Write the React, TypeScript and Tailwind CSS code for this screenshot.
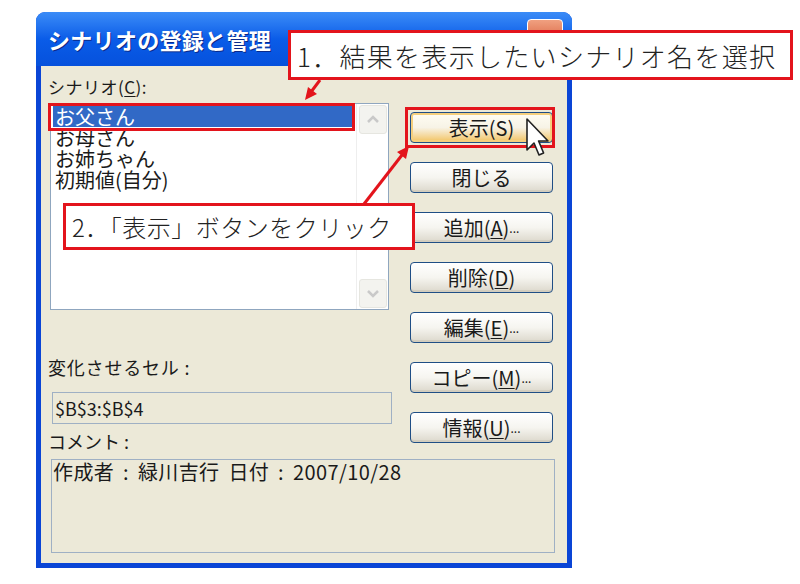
import React from 'react';

const jp = "font-['Noto_Sans_CJK_JP','Noto_Sans_CJK_SC',sans-serif]";

function Mn({ children }: { children: React.ReactNode }) {
  return <span className="underline underline-offset-2 decoration-1">{children}</span>;
}

function XpButton({ children, hot }: { children: React.ReactNode; hot?: boolean }) {
  return (
    <div
      className={
        'h-[31px] w-[143px] rounded-[4px] border border-[#1f4e85] flex items-center justify-center text-[20px] text-[#1a1a1a] ' +
        (hot
          ? 'bg-linear-to-b from-[#fffdf4] via-[#f7f3e6] to-[#f2c25a] shadow-[inset_0_0_0_2px_#f5cf7d]'
          : 'bg-linear-to-b from-white via-[#f6f5f0] to-[#dcd8cc] shadow-[inset_0_-2px_0_#d2cdbf]')
      }
    >
      {children}
    </div>
  );
}

function Chevron({ up }: { up?: boolean }) {
  return (
    <svg width="14" height="9" viewBox="0 0 14 9">
      <path
        d={up ? 'M2 7 L7 2 L12 7' : 'M2 2 L7 7 L12 2'}
        fill="none"
        stroke="#c9c9c9"
        strokeWidth="2.5"
      />
    </svg>
  );
}

export default function App() {
  const scenarios = ['お父さん', 'お母さん', 'お姉ちゃん', '初期値(自分)'];

  return (
    <div className={'relative w-[800px] h-[584px] bg-white overflow-hidden pt-[12px] pl-[36px] ' + jp}>
      {/* Dialog window */}
      <div className="w-[536px] h-[556px] flex flex-col rounded-t-[9px] bg-[#0a45d6]">
        {/* Title bar */}
        <div className="h-[54px] rounded-t-[9px] bg-linear-to-b from-[#3b8cf7] via-[#0a5ce8] to-[#0651dc] flex items-start justify-between pl-[12px] pr-[9px]">
          <span className="mt-[13px] text-[22px] font-bold text-white leading-[28px] tracking-[0.3px] [text-shadow:1px_1px_0_#0a2a8a]">
            シナリオの登録と管理
          </span>
          <div className="mt-[7px] w-[36px] h-[30px] rounded-[4px] border border-white bg-linear-to-b from-[#f0a080] to-[#d2532e]" />
        </div>

        {/* Client area */}
        <div className="flex-1 mx-[5px] mb-[5px] bg-[#ece9d8] pt-[9px] pl-[7px] pr-[14px] text-[#1a1a1a]">
          <div className="flex gap-[18px]">
            {/* Left column */}
            <div className="w-[344px] flex flex-col">
              <div className="h-[24px] leading-[24px] text-[17px] tracking-[0.5px]">
                シナリオ(<Mn>C</Mn>):
              </div>
              <div className="mt-[4px] ml-[2px] w-[339px] h-[207px] border border-[#8fa6bf] bg-white flex">
                <div className="flex-1 p-[2px]">
                  {scenarios.map((s, i) => (
                    <div
                      key={s}
                      className={
                        'h-[21px] leading-[21px] text-[20px] px-[2px] ' +
                        (i === 0 ? 'bg-[#3169c6] text-white' : 'text-[#1a1a1a]')
                      }
                    >
                      {s}
                    </div>
                  ))}
                </div>
                <div className="w-[32px] border-l border-[#eeeeee] flex flex-col justify-between py-[1px] pr-[1px] pl-[2px]">
                  <div className="h-[29px] rounded-[3px] bg-[#f3f3ef] border border-[#e6e6e0] flex items-center justify-center">
                    <Chevron up />
                  </div>
                  <div className="h-[29px] rounded-[3px] bg-[#f3f3ef] border border-[#e6e6e0] flex items-center justify-center">
                    <Chevron />
                  </div>
                </div>
              </div>
              <div className="mt-[45px] h-[24px] leading-[24px] text-[18px] tracking-[0.8px]">変化させるセル :</div>
              <div className="mt-[13px] ml-[4px] w-[340px] h-[32px] border border-[#9fb0c4] bg-[#ece9d8] px-[2px] leading-[30px] text-[18px]">
                $B$3:$B$4
              </div>
              <div className="mt-[5px] h-[24px] leading-[24px] text-[18px]">コメント :</div>
            </div>

            {/* Buttons */}
            <div className="flex flex-col gap-[19px] pt-[37px]">
              <XpButton hot>表示(S)</XpButton>
              <XpButton>閉じる</XpButton>
              <XpButton>
                追加(<Mn>A</Mn>)<span className="text-[12px]">...</span>
              </XpButton>
              <XpButton>
                削除(<Mn>D</Mn>)
              </XpButton>
              <XpButton>
                編集(<Mn>E</Mn>)<span className="text-[12px]">...</span>
              </XpButton>
              <XpButton>
                コピー(<Mn>M</Mn>)<span className="text-[12px]">...</span>
              </XpButton>
              <XpButton>
                情報(<Mn>U</Mn>)<span className="text-[12px]">...</span>
              </XpButton>
            </div>
          </div>

          <div className="mt-[6px] ml-[3px] w-[504px] h-[94px] border border-[#9fb0c4] bg-[#ece9d8] px-[1px] text-[20px] leading-[24px] tracking-[0.4px] [word-spacing:4px]">
            作成者 : 緑川吉行 日付 : 2007/10/28
          </div>
        </div>
      </div>

      {/* Annotation: red frames */}
      <div className="absolute left-[48px] top-[103px] w-[307px] h-[28px] border-[3px] border-[#e3141c]" />
      <div className="absolute left-[405px] top-[107px] w-[150px] h-[41px] border-[3px] border-[#e3141c]" />

      {/* Annotation: arrows */}
      <svg className="absolute left-0 top-0 pointer-events-none" width="800" height="584" viewBox="0 0 800 584">
        <line x1="320" y1="80" x2="311" y2="92" stroke="#e3141c" strokeWidth="3" />
        <polygon points="305,100 308,87 317,94" fill="#e3141c" />
        <line x1="364" y1="204" x2="402" y2="155" stroke="#e3141c" strokeWidth="3" />
        <polygon points="409,146 397,152 406,159" fill="#e3141c" />
      </svg>

      {/* Mouse cursor */}
      <svg className="absolute left-[526px] top-[118px]" width="26" height="42" viewBox="0 0 13 21">
        <path
          d="M0.5 0.5 L0.5 16 L4 12.5 L6.5 18.5 L8.8 17.5 L6.3 11.5 L11 11.5 Z"
          fill="#ffffff"
          stroke="#222222"
          strokeWidth="0.8"
          strokeLinejoin="round"
        />
      </svg>

      {/* Callouts */}
      <div className="absolute left-[288px] top-[30px] w-[505px] h-[50px] border-[3px] border-[#e3141c] bg-white flex items-center pl-[6px] text-[26px] text-[#222] font-light tracking-[1.3px]">
        1．結果を表示したいシナリオ名を選択
      </div>
      <div className="absolute left-[63px] top-[203px] w-[352px] h-[47px] border-[3px] border-[#e3141c] bg-white flex items-center pl-[6px] text-[24px] text-[#222] font-light tracking-[0.5px]">
        2．「表示」ボタンをクリック
      </div>
    </div>
  );
}
